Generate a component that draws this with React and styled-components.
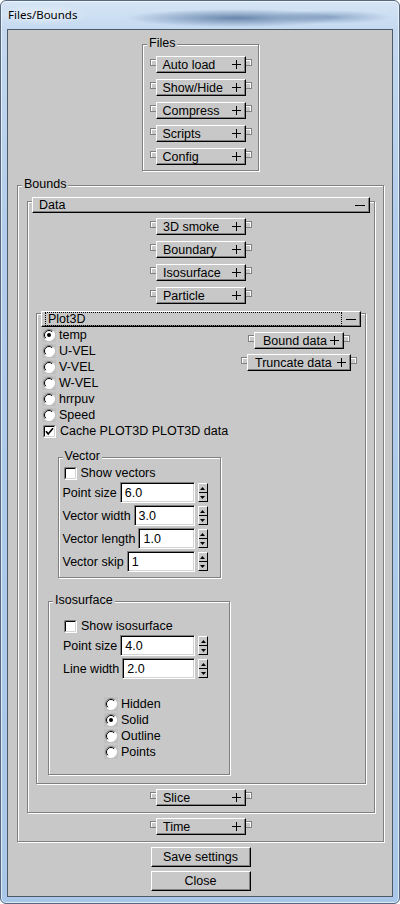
import styled, { createGlobalStyle, css } from "styled-components";

const GlobalStyle = createGlobalStyle`
  html, body {
    margin: 0;
    padding: 0;
    background: #ffffff;
  }
  body {
    font-family: "Liberation Sans", Arial, sans-serif;
    font-size: 12.5px;
    color: #000;
  }
  *, *::before, *::after {
    box-sizing: border-box;
  }
`;

function Plus() {
  return (
    <svg width="9" height="9" viewBox="0 0 9 9">
      <path d="M0 4.5H9M4.5 0V9" stroke="#000" strokeWidth="1" />
    </svg>
  );
}

function RadioIcon({ on }) {
  return (
    <svg width="14" height="14" viewBox="0 0 14 14">
      <rect width="14" height="14" fill="#c0c0c0" />
      <circle cx="7" cy="7" r="5.5" fill="#fff" />
      <path d="M3.1 10.9A5.5 5.5 0 0 1 10.9 3.1" fill="none" stroke="#808080" />
      <path d="M3.8 10.2A4.5 4.5 0 0 1 10.2 3.8" fill="none" stroke="#000" />
      <path d="M10.9 3.1A5.5 5.5 0 0 1 3.1 10.9" fill="none" stroke="#fff" />
      {on && <circle cx="7" cy="7" r="2" fill="#000" />}
    </svg>
  );
}

function CheckIcon({ on }) {
  return (
    <svg width="13" height="13" viewBox="0 0 13 13">
      <rect x="0" y="0" width="13" height="13" fill="#fff" />
      <path d="M0.5 12.5V0.5H12.5" fill="none" stroke="#808080" />
      <path d="M1.5 11.5V1.5H11.5" fill="none" stroke="#000" />
      <path d="M1.5 11.5H11.5V1.5" fill="none" stroke="#d4d4d4" />
      {on && (
        <path d="M3 6.2L5.2 9L10 3.2" fill="none" stroke="#000" strokeWidth="1.7" />
      )}
    </svg>
  );
}

function Arrow({ down }) {
  return (
    <svg width="5" height="3" viewBox="0 0 5 3">
      <path d={down ? "M0 0H5L2.5 3Z" : "M0 3H5L2.5 0Z"} fill="#000" />
    </svg>
  );
}

function Rollout({ label, width = 90, indent = 6, top = 0 }) {
  return (
    <TabRow $top={top}>
      <Tab $side="left" />
      <RollBtn $width={width} $indent={indent}>
        <span>{label}</span>
        <Plus />
      </RollBtn>
      <Tab $side="right" />
    </TabRow>
  );
}

function Radio({ label, on }) {
  return (
    <OptionRow>
      <RadioIcon on={on} />
      <span>{label}</span>
    </OptionRow>
  );
}

function Check({ label, on }) {
  return (
    <OptionRow $check>
      <CheckIcon on={on} />
      <span>{label}</span>
    </OptionRow>
  );
}

function Field({ label, value }) {
  return (
    <FieldRow>
      <FieldLabel>{label}</FieldLabel>
      <TextBox>{value}</TextBox>
      <Spinner>
        <SpinHalf>
          <Arrow />
        </SpinHalf>
        <SpinHalf>
          <Arrow down />
        </SpinHalf>
      </Spinner>
    </FieldRow>
  );
}

export default function App() {
  return (
    <>
      <GlobalStyle />
      <Window>
        <TitleBar>Files/Bounds</TitleBar>
        <Client>
          <FilesPanel>
            <PanelLabel>Files</PanelLabel>
            <Rollout label="Auto load" />
            <Rollout label="Show/Hide" />
            <Rollout label="Compress" />
            <Rollout label="Scripts" />
            <Rollout label="Config" />
          </FilesPanel>

          <BoundsPanel>
            <PanelLabel>Bounds</PanelLabel>
            <DataFrame>
              <RollHeader $lift={-5}>
                Data
                <Minus />
              </RollHeader>
              <Rollout label="3D smoke" top={5} />
              <Rollout label="Boundary" top={6} />
              <Rollout label="Isosurface" top={6} />
              <Rollout label="Particle" top={6} />

              <Plot3DFrame>
                <RollHeader $lift={-3} $focus>
                  Plot3D
                  <Minus />
                </RollHeader>
                <Plot3DBody>
                  <LeftCol>
                    <OptionList>
                      <Radio label="temp" on />
                      <Radio label="U-VEL" />
                      <Radio label="V-VEL" />
                      <Radio label="W-VEL" />
                      <Radio label="hrrpuv" />
                      <Radio label="Speed" />
                      <Check label="Cache PLOT3D PLOT3D data" on />
                    </OptionList>

                    <VectorPanel>
                      <PanelLabel>Vector</PanelLabel>
                      <Check label="Show vectors" />
                      <FieldList>
                        <Field label="Point size" value="6.0" />
                        <Field label="Vector width" value="3.0" />
                        <Field label="Vector length" value="1.0" />
                        <Field label="Vector skip" value="1" />
                      </FieldList>
                    </VectorPanel>

                    <IsoPanel>
                      <PanelLabel>Isosurface</PanelLabel>
                      <Check label="Show isosurface" />
                      <FieldList>
                        <Field label="Point size" value="4.0" />
                        <Field label="Line width" value="2.0" />
                      </FieldList>
                      <ModeList>
                        <Radio label="Hidden" />
                        <Radio label="Solid" on />
                        <Radio label="Outline" />
                        <Radio label="Points" />
                      </ModeList>
                    </IsoPanel>
                  </LeftCol>

                  <RightCol>
                    <Rollout label="Bound data" indent={8} />
                    <Rollout label="Truncate data" width={104} indent={7} />
                  </RightCol>
                </Plot3DBody>
              </Plot3DFrame>

              <Rollout label="Slice" top={5} />
            </DataFrame>

            <Rollout label="Time" top={5} />
          </BoundsPanel>

          <ActionButton $top={5}>Save settings</ActionButton>
          <ActionButton $top={4}>Close</ActionButton>
        </Client>
      </Window>
    </>
  );
}

const Window = styled.div`
  width: 400px;
  height: 904px;
  display: flex;
  flex-direction: column;
  border: 1px solid #56687f;
  border-radius: 6px;
  overflow: hidden;
  background: linear-gradient(
    to bottom,
    #d6e5f5 0,
    #c4d9f0 28px,
    #b2cdeb 220px,
    #aac7e9 100%
  );
  box-shadow: inset 0 0 0 1px rgba(255, 255, 255, 0.6);
`;

const TitleBar = styled.div`
  flex: none;
  height: 28px;
  display: flex;
  align-items: center;
  padding: 0 0 1px 7px;
  font-family: "Noto Sans", "Open Sans", sans-serif;
  font-size: 11.5px;
  color: #000;
  background:
    radial-gradient(ellipse 110px 9px at 235px 17px, rgba(62, 96, 142, 0.7), rgba(62, 96, 142, 0)),
    radial-gradient(ellipse 60px 7px at 330px 16px, rgba(72, 106, 152, 0.45), rgba(72, 106, 152, 0)),
    radial-gradient(ellipse 50px 10px at 40px 14px, rgba(255, 255, 255, 0.5), rgba(255, 255, 255, 0));
`;

const Client = styled.div`
  flex: none;
  height: 868px;
  margin: 0 6px;
  border: 1px solid #4f5a68;
  background: #c8c8c8;
  display: flex;
  flex-direction: column;
  padding: 14px 8px 0 9px;
`;

const Etched = css`
  position: relative;
  border: 1px solid #808080;
  box-shadow: inset 1px 1px 0 #fff, 1px 1px 0 #fff;
`;

const PanelLabel = styled.span`
  position: absolute;
  top: -9px;
  left: 4px;
  padding: 0 2px;
  line-height: 14px;
  background: #c8c8c8;
  white-space: nowrap;
`;

const FilesPanel = styled.div`
  ${Etched};
  align-self: center;
  width: 117px;
  display: flex;
  flex-direction: column;
  align-items: center;
  gap: 6px;
  padding: 11px 0 5px;
`;

const BoundsPanel = styled.div`
  ${Etched};
  margin-top: 14px;
  display: flex;
  flex-direction: column;
  align-items: center;
  padding: 15px 8px 6px 9px;
`;

const DataFrame = styled.div`
  ${Etched};
  align-self: stretch;
  display: flex;
  flex-direction: column;
  align-items: center;
  padding: 0 4px 6px;
`;

const Plot3DFrame = styled.div`
  ${Etched};
  align-self: stretch;
  margin: 9px 4px 0;
  padding: 0 4px 8px;
  display: flex;
  flex-direction: column;
`;

const RollHeader = styled.div`
  position: relative;
  align-self: stretch;
  height: 16px;
  margin-top: ${(p) => p.$lift}px;
  display: flex;
  align-items: center;
  justify-content: space-between;
  padding: 0 4px 0 6px;
  background: #c8c8c8;
  border: 1px solid;
  border-color: #fff #000 #000 #fff;
  box-shadow: inset -1px -1px 0 #808080;
  ${(p) =>
    p.$focus &&
    css`
      &::after {
        content: "";
        position: absolute;
        left: 3px;
        top: 0;
        bottom: 0;
        right: 18px;
        border: 1px dotted #000;
      }
    `}
`;

const Minus = styled.span`
  width: 10px;
  height: 1px;
  background: #000;
`;

const TabRow = styled.div`
  display: flex;
  align-items: flex-start;
  margin-top: ${(p) => p.$top}px;
`;

const Tab = styled.span`
  width: 6px;
  height: 7px;
  margin-top: 3px;
  border: 1px solid #808080;
  ${(p) =>
    p.$side === "left"
      ? css`
          border-right: none;
          box-shadow: inset 1px 1px 0 #fff;
        `
      : css`
          border-left: none;
          box-shadow: inset 0 1px 0 #fff, inset -1px 0 0 #fff;
        `}
`;

const RollBtn = styled.div`
  width: ${(p) => p.$width}px;
  height: 17px;
  display: flex;
  align-items: center;
  justify-content: space-between;
  padding: 0 4px 0 ${(p) => p.$indent}px;
  background: #c8c8c8;
  border: 1px solid;
  border-color: #fff #000 #000 #fff;
  box-shadow: inset -1px -1px 0 #808080;
  white-space: nowrap;
`;

const Plot3DBody = styled.div`
  display: flex;
`;

const LeftCol = styled.div`
  width: 196px;
  flex: none;
  display: flex;
  flex-direction: column;
  align-items: center;
`;

const RightCol = styled.div`
  flex: 1;
  display: flex;
  flex-direction: column;
  align-items: center;
  gap: 5px;
  padding-top: 5px;
`;

const OptionList = styled.div`
  align-self: flex-start;
  margin-left: 1px;
  display: flex;
  flex-direction: column;
`;

const OptionRow = styled.div`
  height: 16px;
  display: flex;
  align-items: center;
  gap: ${(p) => (p.$check ? 4 : 3)}px;
  white-space: nowrap;
  ${(p) =>
    p.$check &&
    css`
      margin-left: 1px;
    `}
`;

const VectorPanel = styled.div`
  ${Etched};
  width: 163px;
  margin-top: 18px;
  padding: 7px 12px 5px 4px;
  display: flex;
  flex-direction: column;
`;

const IsoPanel = styled.div`
  ${Etched};
  width: 182px;
  margin-top: 23px;
  padding: 16px 0 14px 14px;
  display: flex;
  flex-direction: column;
`;

const FieldList = styled.div`
  margin-top: 1px;
  display: flex;
  flex-direction: column;
  gap: 2px;
`;

const FieldRow = styled.div`
  width: 145px;
  height: 21px;
  display: flex;
  align-items: center;
`;

const FieldLabel = styled.span`
  margin-right: 3px;
  white-space: nowrap;
`;

const TextBox = styled.div`
  flex: 1;
  height: 21px;
  display: flex;
  align-items: center;
  padding-left: 4px;
  background: #fff;
  border: 1px solid;
  border-color: #808080 #fff #fff #808080;
  box-shadow: inset 1px 1px 0 #000, inset -1px -1px 0 #d4d4d4;
`;

const Spinner = styled.div`
  flex: none;
  width: 10px;
  height: 19px;
  margin-left: 3px;
  display: flex;
  flex-direction: column;
  background: #c8c8c8;
  border: 1px solid;
  border-color: #fff #000 #000 #fff;
`;

const SpinHalf = styled.div`
  flex: 1;
  display: flex;
  align-items: center;
  justify-content: center;
  & + & {
    border-top: 1px solid #000;
  }
`;

const ModeList = styled.div`
  margin: 17px 0 0 41px;
  display: flex;
  flex-direction: column;
`;

const ActionButton = styled.div`
  align-self: center;
  width: 100px;
  height: 20px;
  margin-top: ${(p) => p.$top}px;
  display: flex;
  align-items: center;
  justify-content: center;
  background: #c8c8c8;
  border: 1px solid;
  border-color: #fff #000 #000 #fff;
  box-shadow: inset -1px -1px 0 #808080;
`;
